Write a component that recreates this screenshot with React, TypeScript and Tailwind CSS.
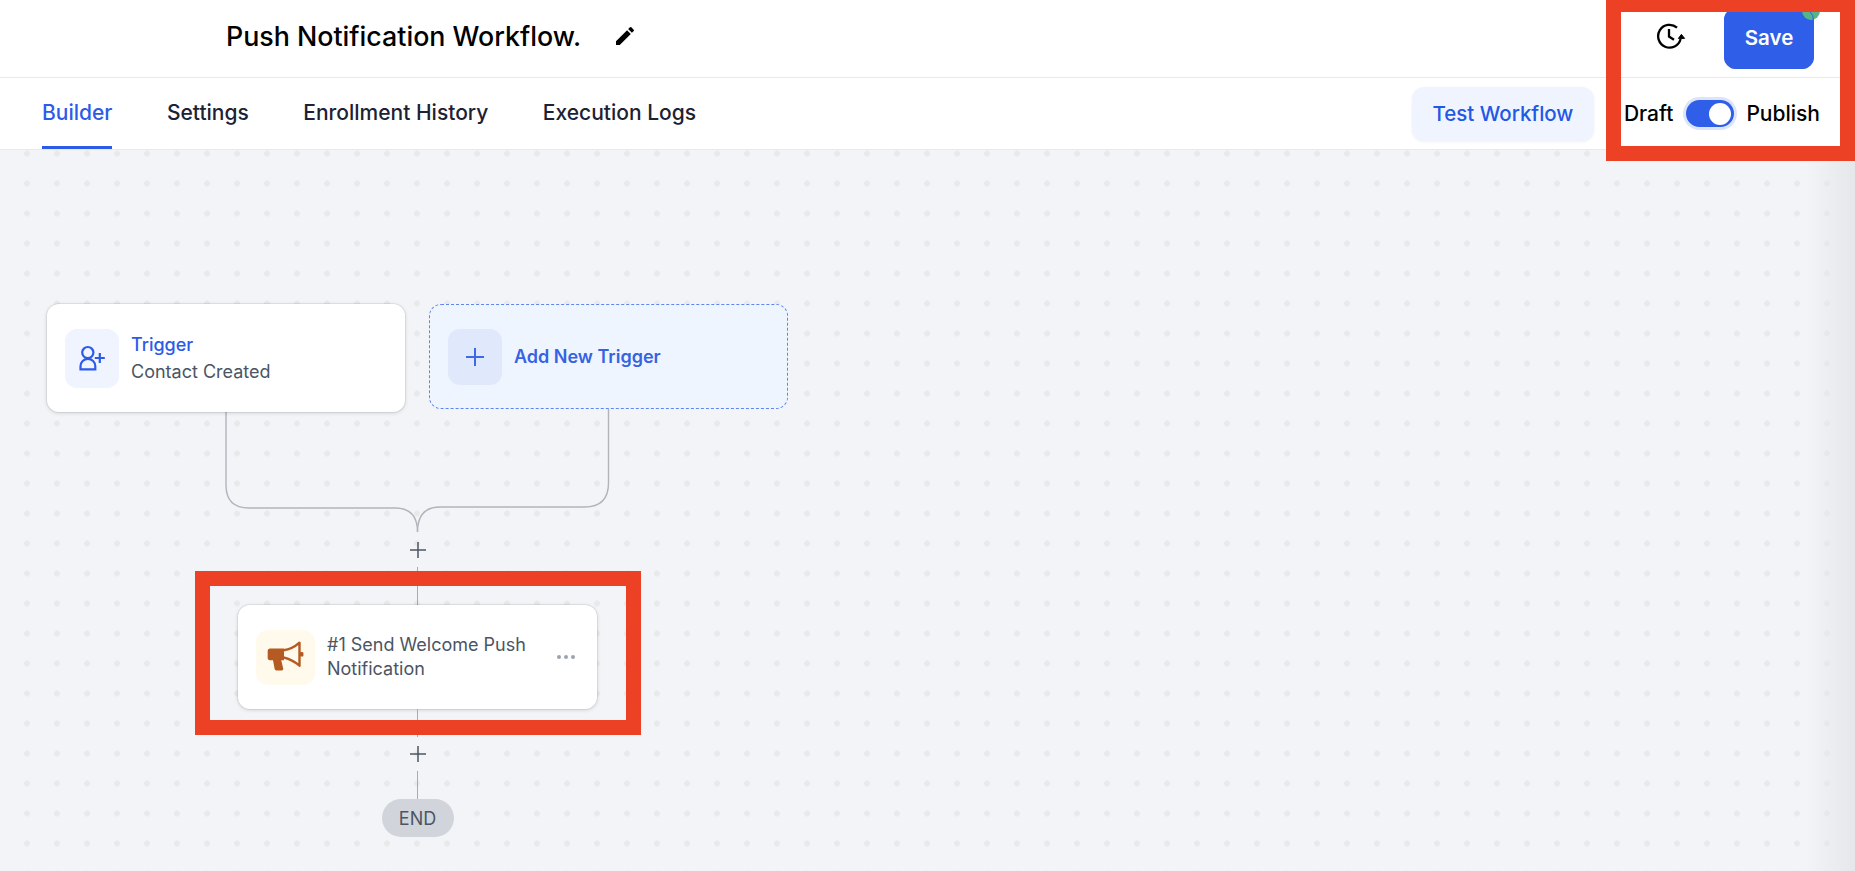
import React from "react";
import { MdEdit } from "react-icons/md";

const font = { fontFamily: "Inter, 'Noto Sans', sans-serif" };

const PlusMark = () => (
  <svg width="18" height="18" viewBox="0 0 18 18" fill="none" stroke="#4b5563" strokeWidth="1.5">
    <path d="M9 1v16M1 9h16" />
  </svg>
);

const ClockIcon = () => (
  <svg className="-mt-[5px] shrink-0" width="30" height="28" viewBox="0 0 30 28" fill="none" stroke="#000" strokeWidth="2.3">
    <path d="M21 5.600A11.400 11.400 0 1 0 24.600 17" />
    <path d="M13 7v7.500l5 3.200" />
    <path d="M25.400 12.400l3.200 4h-6.200z" fill="#000" stroke="#000" strokeWidth="1" />
  </svg>
);

const UserPlusIcon = () => (
  <svg width="27" height="26" viewBox="0 0 27 26" fill="none" stroke="#2d5be8" strokeWidth="2.2">
    <circle cx="8.800" cy="7.600" r="5.600" />
    <path d="M1.500 24.400v-3.200a7.400 7.400 0 0 1 14.800 0v3.200z" />
    <path d="M20.800 8v10M15.800 13h10" />
  </svg>
);

const MegaphoneIcon = () => (
  <svg className="-mt-[2px]" width="37" height="31" viewBox="0 0 37 31" fill="none">
    <path
      d="M3 7.500h14v11.800h-2.800l2 8.200c.2 1-.4 1.900-1.400 1.900H9.500c-1 0-1.700-.6-1.900-1.600L6 19.300H3c-1.300 0-2.300-1-2.300-2.300v-7.200c0-1.300 1-2.300 2.300-2.300z"
      fill="#b45a22"
    />
    <path d="M16.500 9.200c6-.6 11-3 16-7.500v23c-4.500-4-8-6-16-8.300" stroke="#b45a22" strokeWidth="2.400" strokeLinejoin="round" />
    <rect x="33" y="11" width="3.400" height="4.600" rx="1.200" fill="#b45a22" />
  </svg>
);

const Tab = ({ label, active }: { label: string; active?: boolean }) => (
  <div
    className={
      active
        ? "flex h-full items-center border-b-[3px] border-[#2d5be8] pt-px text-[21px] font-medium text-[#2d5be8]"
        : "flex h-full items-center border-b-[3px] border-transparent pt-px text-[21px] font-medium text-[#1c2233]"
    }
  >
    {label}
  </div>
);

const App = () => {
  return (
    <main className="relative flex h-screen flex-col overflow-hidden bg-white" style={font}>
      {/* title row */}
      <header className="flex h-[78px] shrink-0 items-center border-b border-[#e8e9eb] pl-[226px] pr-[41px]">
        <h1 className="-mt-[5px] text-[26.800px] font-medium text-black">Push Notification Workflow.</h1>
        <MdEdit className="-mt-[5px] ml-[32px] text-black" size={24} />
        <div className="ml-auto flex items-center">
          <ClockIcon />
          <div className="relative ml-[38px] flex h-[61px] w-[90px] items-center justify-center rounded-xl bg-[#2f5fe8] text-[20.500px] font-semibold text-white">
            Save
            <span className="absolute -right-[6px] -top-[6px] h-[18px] w-[18px] rounded-full bg-[#55b586]"></span>
            <span className="absolute inset-0 rounded-xl border border-[#2f5fe8]"></span>
          </div>
        </div>
      </header>

      {/* tabs row */}
      <nav className="flex h-[72px] shrink-0 items-center border-b border-[#e8e9eb] pl-[42px] pr-[35px]">
        <div className="flex h-full gap-[54.500px]">
          <Tab label="Builder" active />
          <Tab label="Settings" />
          <Tab label="Enrollment History" />
          <Tab label="Execution Logs" />
        </div>
        <div className="ml-auto flex items-center">
          <button className="flex h-[54px] w-[182px] items-center justify-center rounded-xl bg-[#eff4fe] pt-[2px] text-[20.500px] font-medium text-[#2258e6] shadow-[0_1px_3px_rgba(0,0,0,0.06)]">
            Test Workflow
          </button>
          <span className="ml-[30px] text-[21px] font-medium text-black">Draft</span>
          <span className="ml-[13px] flex h-[27px] w-[48px] items-center justify-end rounded-full bg-[#2f5fe8] pr-[3px] shadow-[0_0_0_3px_#dbe4fb]">
            <span className="h-[22px] w-[22px] rounded-full bg-white"></span>
          </span>
          <span className="ml-[12px] text-[21px] font-medium text-black">Publish</span>
        </div>
      </nav>

      {/* canvas */}
      <section className="relative flex-1 bg-[#f2f4f8] bg-[radial-gradient(circle,#e9e9ea_2.600px,transparent_3.200px)] bg-[size:30px_30px] bg-[position:12px_-11.500px] pl-[47px] pt-[154px]">
        <div className="flex w-[741px] flex-col items-center">
          <div className="relative z-10 flex items-start gap-6">
            <div className="flex h-[108px] w-[358px] items-center rounded-xl bg-white pl-[18px] shadow-[0_0_0_1px_rgba(0,0,0,0.06),0_1px_4px_rgba(0,0,0,0.14)]">
              <div className="flex h-[59px] w-[54px] items-center justify-center rounded-xl bg-[#eff4fe]">
                <UserPlusIcon />
              </div>
              <div className="ml-3 flex flex-col gap-[5px]">
                <span className="text-[18px] font-medium leading-[22px] text-[#2d5be8]">Trigger</span>
                <span className="text-[18px] leading-[22px] text-[#4b5563]">Contact Created</span>
              </div>
            </div>
            <div className="flex h-[105px] w-[359px] items-center rounded-xl border border-dashed border-[#5f86ee] bg-[#eff5fe] pl-[18px]">
              <div className="flex h-[56px] w-[54px] items-center justify-center rounded-xl bg-[#dfe9fb]">
                <svg width="18" height="18" viewBox="0 0 18 18" fill="none" stroke="#3f6ae6" strokeWidth="2">
                  <path d="M9 0v18M0 9h18" />
                </svg>
              </div>
              <span className="ml-3 text-[18px] font-semibold text-[#3563e4]">Add New Trigger</span>
            </div>
          </div>

          {/* branch connector */}
          <svg className="-mt-[3px] shrink-0" width="741" height="123" viewBox="0 0 741 123" fill="none" stroke="#b2b4b9" strokeWidth="1.400">
            <path d="M179 0v76q0 23 23 23h146q22.500 0 22.500 24" />
            <path d="M561.500 0v74q0 24-24 24H393q-22.500 0-22.500 25" />
          </svg>

          <div className="flex h-[35px] items-center justify-center">
            <PlusMark />
          </div>
          <div className="h-[38px] w-[1.500px] bg-[#a9abb0]"></div>

          <div className="flex h-[104px] w-[359px] items-center rounded-xl bg-white pl-[18px] pr-[22px] shadow-[0_0_0_1px_rgba(0,0,0,0.06),0_1px_4px_rgba(0,0,0,0.14)]">
            <div className="flex h-[55px] w-[59px] shrink-0 items-center justify-center rounded-xl bg-[#fffaeb]">
              <MegaphoneIcon />
            </div>
            <span className="ml-3 flex-1 text-[18px] leading-[24px] text-[#4b5563]">#1 Send Welcome Push Notification</span>
            <div className="flex gap-[3px]">
              <span className="h-1 w-1 rounded-full bg-[#9ca3af]"></span>
              <span className="h-1 w-1 rounded-full bg-[#9ca3af]"></span>
              <span className="h-1 w-1 rounded-full bg-[#9ca3af]"></span>
            </div>
          </div>

          <div className="h-[28px] w-[1.500px] bg-[#a9abb0]"></div>
          <div className="flex h-[34px] items-center justify-center">
            <PlusMark />
          </div>
          <div className="h-[28px] w-[1.500px] bg-[#a9abb0]"></div>
          <div className="flex h-[38px] w-[72px] items-center justify-center rounded-full bg-[#d1d5db] text-[18px] text-[#4b5563]">
            END
          </div>
        </div>

        {/* edge shade of the canvas */}
        <div className="pointer-events-none absolute inset-y-0 right-0 w-[50px] bg-gradient-to-r from-transparent to-[#e6e7ea]"></div>
      </section>

      {/* red annotation boxes */}
      <div className="absolute left-[1606px] top-0 h-[161px] w-[249px] border-x-[15px] border-b-[15px] border-t-[12px] border-[#ec4125]"></div>
      <div className="absolute left-[195px] top-[571px] h-[164px] w-[446px] border-[15px] border-[#ec4125]"></div>
    </main>
  );
};

export default App;
